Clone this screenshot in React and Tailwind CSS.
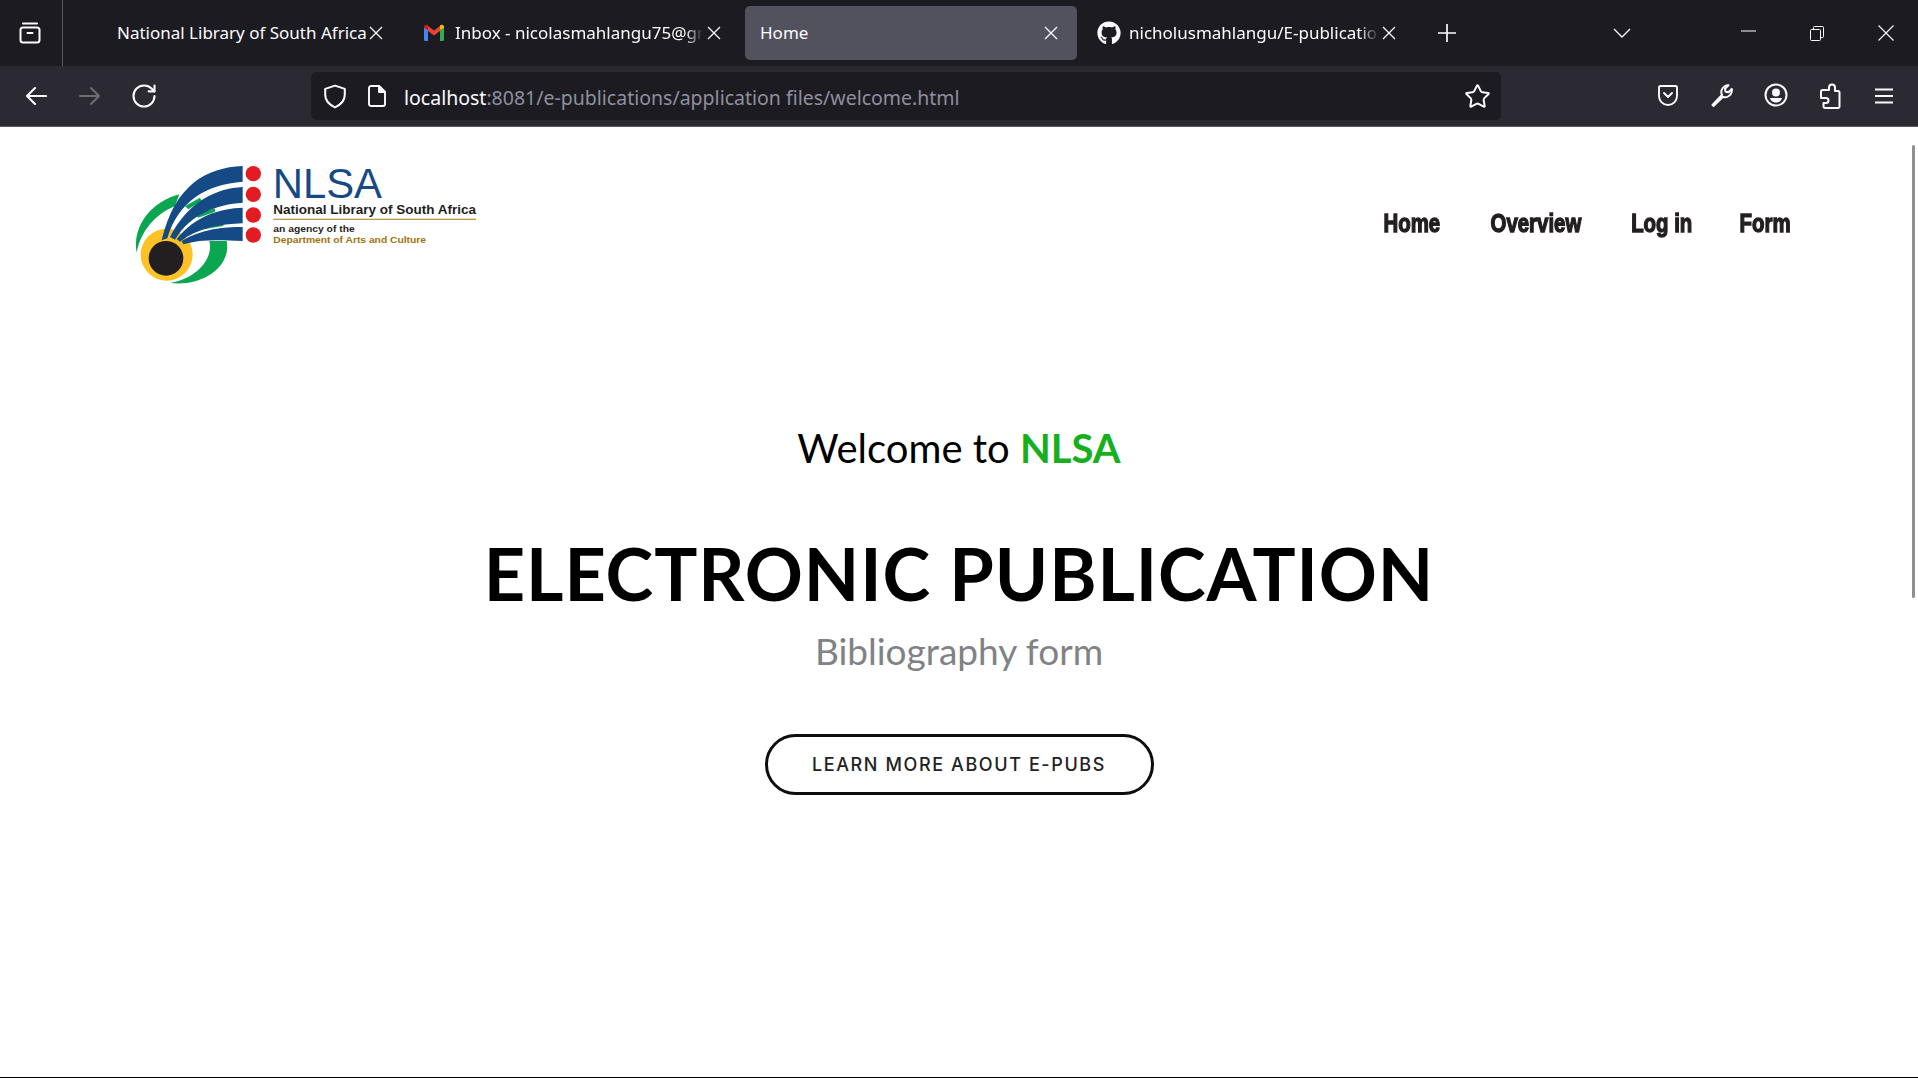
import React from "react";
import { RotateCw, Star } from "lucide-react";
import { FaGithub } from "react-icons/fa";

function Gmail() {
  return (
    <svg width="22" height="18" viewBox="0 0 22 18" className="shrink-0">
      <path d="M1 17V3l4 3v11H2a1 1 0 0 1-1-1z" fill="#4285f4" />
      <path d="M21 17V3l-4 3v11h3a1 1 0 0 0 1-1z" fill="#34a853" />
      <path d="M17 6V1.500l1-.5c1-.6 3 0 3 2v1z" fill="#fbbc04" />
      <path d="M5 6V1.500L4 1C3 .4 1 1 1 3v1z" fill="#c5221f" />
      <path d="M5 2l6 4.500L17 2v5l-6 4.500L5 7z" fill="#ea4335" />
    </svg>
  );
}

function CloseX({ className = "" }) {
  return (
    <svg width="14" height="14" viewBox="0 0 14 14" fill="none" stroke="#fbfbfe" strokeWidth="1.3" className={`shrink-0 ${className}`}>
      <path d="M1 1l12 12M13 1L1 13" />
    </svg>
  );
}

function Logo() {
  return (
    <svg width="370" height="140" viewBox="0 0 1110 420" className="shrink-0">
      <path d="M178,130 C100,150 36,220 50,305 C62,240 105,190 165,165 Z" fill="#0aa650" />
      <path d="M150,396 C250,408 335,345 320,270 L268,270 C282,330 220,385 150,396 Z" fill="#0aa650" />
      <path d="M195,165 L240,140 L245,150 L205,175 Z" fill="#0aa650" />
      <path d="M225,190 L285,172 L285,182 L235,200 Z" fill="#0aa650" />
      <path d="M245,225 L310,215 L310,225 L250,235 Z" fill="#0aa650" />
      <circle cx="140" cy="311" r="78" fill="#fdc226" />
      <path d="M140,255 L150,232 L156,236 L148,258 Z M155,258 L172,235 L178,240 L165,262 Z" fill="#fdc226" />
      <circle cx="138" cy="322" r="52" fill="#231f20" />
      <path d="M368,45 C260,50 165,100 125,268 L142,262 C175,150 260,100 368,92 Z" fill="#144a85" />
      <path d="M368,108 C290,112 205,150 150,258 L165,266 C210,190 290,160 368,155 Z" fill="#144a85" />
      <path d="M368,170 C300,172 225,195 170,264 L180,272 C235,230 300,220 368,217 Z" fill="#144a85" />
      <path d="M368,228 C310,228 240,235 185,270 L190,280 C245,262 310,268 368,270 Z" fill="#144a85" />
      <circle cx="400" cy="68" r="23" fill="#e31b23" />
      <circle cx="400" cy="130" r="23" fill="#e31b23" />
      <circle cx="400" cy="192" r="23" fill="#e31b23" />
      <circle cx="400" cy="252" r="23" fill="#e31b23" />
      <text x="458" y="140" fontSize="125" textLength="328" lengthAdjust="spacingAndGlyphs" fill="#174a84" fontFamily="'Liberation Sans', sans-serif">NLSA</text>
      <text x="460" y="188" fontSize="37" fontWeight="700" textLength="608" lengthAdjust="spacingAndGlyphs" fill="#231f20" fontFamily="'Liberation Sans', sans-serif">National Library of South Africa</text>
      <rect x="460" y="203" width="608" height="4" fill="#b99a52" />
      <text x="460" y="243" fontSize="25" fontWeight="700" textLength="244" lengthAdjust="spacingAndGlyphs" fill="#231f20" fontFamily="'Liberation Sans', sans-serif">an agency of the</text>
      <text x="460" y="277" fontSize="25" fontWeight="700" textLength="458" lengthAdjust="spacingAndGlyphs" fill="#a0730f" fontFamily="'Liberation Sans', sans-serif">Department of Arts and Culture</text>
    </svg>
  );
}

function NavItem({ w, children }) {
  return (
    <span className={`flex justify-center whitespace-nowrap ${w}`}>
      <span className="inline-block scale-x-[.77]">{children}</span>
    </span>
  );
}

export default function App() {
  return (
    <div className="relative flex h-[1078px] w-[1918px] flex-col overflow-hidden bg-white font-['Noto_Sans',sans-serif]">
      {/* tab strip */}
      <div className="flex h-[66px] shrink-0 items-center bg-[#1c1b22] text-[#fbfbfe]">
        <div className="flex h-full w-[63px] shrink-0 items-center justify-center border-r border-[#55555f] pr-[2px]">
          <svg width="24" height="24" viewBox="0 0 24 24" fill="none" stroke="#fbfbfe" strokeWidth="2" strokeLinecap="round">
            <rect x="2.500" y="6.500" width="19" height="15" rx="2.500" />
            <path d="M5 2.500h14M9.500 12h5" />
          </svg>
        </div>
        <span className="ml-[54px] w-[249px] shrink-0 whitespace-nowrap text-[17px]">National Library of South Africa</span>
        <CloseX className="ml-[3px]" />
        <span className="ml-[40px]"><Gmail /></span>
        <span className="ml-[10px] w-[248px] shrink-0 overflow-hidden whitespace-nowrap text-[17px] [mask-image:linear-gradient(to_right,black_93%,transparent)]">Inbox - nicolasmahlangu75@gmail.com</span>
        <CloseX className="ml-[4px]" />
        <div className="ml-[24px] flex h-[54px] w-[332px] shrink-0 items-center justify-between rounded-[5px] bg-[#52525e] pl-[15px] pr-[19px]">
          <span className="text-[17px]">Home</span>
          <CloseX />
        </div>
        <span className="ml-[20px] shrink-0"><FaGithub size={24} color="#fbfbfe" /></span>
        <span className="ml-[8px] w-[250px] shrink-0 overflow-hidden whitespace-nowrap text-[17px] [mask-image:linear-gradient(to_right,black_92%,transparent)]">nicholusmahlangu/E-publications</span>
        <CloseX className="ml-[3px]" />
        <svg width="18" height="18" viewBox="0 0 18 18" fill="none" stroke="#fbfbfe" strokeWidth="1.700" className="ml-[42px] shrink-0"><path d="M9 0v18M0 9h18" /></svg>
        <svg width="18" height="10" viewBox="0 0 18 10" fill="none" stroke="#fbfbfe" strokeWidth="1.300" className="ml-[157px] shrink-0"><path d="M1 1l8 8 8-8" /></svg>
        <svg width="15" height="4" viewBox="0 0 15 4" fill="none" stroke="#fbfbfe" strokeWidth="1" className="ml-[110px] mb-[4px] shrink-0"><path d="M0 2h15" /></svg>
        <svg width="14" height="15" viewBox="0 0 14 15" fill="none" stroke="#fbfbfe" strokeWidth="1" className="ml-[54px] shrink-0"><rect x=".5" y="3.500" width="10" height="11" rx="1" /><path d="M3.500 3.500V1.500a1 1 0 0 1 1-1h8a1 1 0 0 1 1 1v9a1 1 0 0 1-1 1h-2" /></svg>
        <svg width="16" height="16" viewBox="0 0 16 16" fill="none" stroke="#fbfbfe" strokeWidth="1.100" className="ml-[54px] shrink-0"><path d="M.5.500l15 15M15.500.5l-15 15" /></svg>
      </div>

      {/* toolbar */}
      <div className="flex h-[61px] shrink-0 items-center border-b border-[#5b5b66] bg-[#2b2a33] text-[#fbfbfe]">
        <svg width="22" height="20" viewBox="0 0 22 20" fill="none" stroke="#fbfbfe" strokeWidth="2.100" strokeLinecap="round" strokeLinejoin="round" className="ml-[25px] shrink-0"><path d="M10 2L2 10l8 8M2 10h19" /></svg>
        <svg width="22" height="20" viewBox="0 0 22 20" fill="none" stroke="#6d6c73" strokeWidth="2.100" strokeLinecap="round" strokeLinejoin="round" className="ml-[32px] shrink-0"><path d="M12 2l8 8-8 8M20 10H1" /></svg>
        <RotateCw size={28} strokeWidth={1.8} className="ml-[29px] shrink-0" />
        <div className="ml-[153px] flex h-[48px] w-[1190px] shrink-0 items-center rounded-[5px] bg-[#1c1b22] pl-[13px]">
          <svg width="22" height="25" viewBox="2 1 20 23" fill="none" stroke="#fbfbfe" strokeWidth="1.900" strokeLinejoin="round" className="shrink-0"><path d="M12 2.500L21 5.500V11C21 17 16.500 20.500 12 22.500C7.500 20.500 3 17 3 11V5.500Z" /></svg>
          <svg width="18" height="22" viewBox="0 0 18 22" fill="none" stroke="#fbfbfe" strokeWidth="1.900" strokeLinejoin="round" className="ml-[22px] shrink-0"><path d="M3 1h8l6 6v12a2 2 0 0 1-2 2H3a2 2 0 0 1-2-2V3a2 2 0 0 1 2-2z" /><path d="M11 1v6h6z" fill="#fbfbfe" /></svg>
          <span className="ml-[18px] mt-[3px] whitespace-nowrap text-[19.500px]">
            localhost<span className="text-[#8f8f9d]">:8081/e-publications/application files/welcome.html</span>
          </span>
          <Star size={27} strokeWidth={1.800} className="ml-auto mr-[10px] shrink-0" />
        </div>
        <div className="ml-[140px] flex">
          <span className="flex w-[54px] justify-center pt-[1px]">
            <svg width="22" height="23" viewBox="0 0 22 23" fill="none" stroke="#fbfbfe" strokeWidth="1.900" strokeLinecap="round" strokeLinejoin="round">
              <path d="M3.500 2h15A1.500 1.500 0 0 1 20 3.500V12a9 9 0 0 1-18 0V3.500A1.500 1.500 0 0 1 3.500 2z" />
              <path d="M7 9l4 4 4-4" />
            </svg>
          </span>
          <span className="flex w-[54px] justify-center">
            <svg width="24" height="24" viewBox="0 0 24 24" fill="none" stroke="#fbfbfe" strokeWidth="2" strokeLinecap="round" strokeLinejoin="round">
              <path d="M2.500 22l9.500-10c-1.500-3-.5-7 3-9 1.200-.7 2.300-1 3.500-.8l-3.500 3.500.5 3 3 .5 3.300-3.300c.4 3-1 6-3.800 7.600-1.500.9-3.500 1-5 .3L3.500 23" />
            </svg>
          </span>
          <span className="flex w-[54px] justify-center">
            <svg width="24" height="24" viewBox="0 0 24 24" fill="none" stroke="#fbfbfe" strokeWidth="2">
              <circle cx="12" cy="12" r="10.500" />
              <circle cx="12" cy="9.500" r="3" fill="#fbfbfe" />
              <path d="M6 15h12c-1 3.500-3.400 4.500-6 4.500S7 18.500 6 15z" fill="#fbfbfe" stroke="none" />
            </svg>
          </span>
          <span className="flex w-[54px] justify-center">
            <svg width="22" height="26" viewBox="0 0 22 26" fill="none" stroke="#fbfbfe" strokeWidth="2" strokeLinejoin="round">
              <path d="M8 7h2V4.500a3 3 0 0 1 6 0V8h3a1.500 1.500 0 0 1 1.500 1.500V23.500A1.500 1.500 0 0 1 19 25H6a1.500 1.500 0 0 1-1.500-1.500V20H7a2.500 2.500 0 0 0 0-5H2v-6.500A1.500 1.500 0 0 1 3.500 7z" />
            </svg>
          </span>
          <span className="flex w-[54px] items-center justify-center">
            <svg width="18" height="16" viewBox="0 0 18 16" fill="none" stroke="#fbfbfe" strokeWidth="1.900"><path d="M0 1.500h18M0 8h18M0 14.500h18" /></svg>
          </span>
        </div>
      </div>

      {/* page */}
      <div className="relative flex flex-1 flex-col">
        <header className="flex h-[188px] items-center justify-between pl-[120px] pr-[128px]">
          <Logo />
          <nav className="mt-[6px] flex items-center gap-[49px] font-['Liberation_Sans',sans-serif] text-[26.500px] font-bold text-[#231f20] [-webkit-text-stroke:1.400px_#231f20]">
            <NavItem w="w-[57px]">Home</NavItem>
            <NavItem w="w-[94px]">Overview</NavItem>
            <NavItem w="w-[59px]">Log in</NavItem>
            <NavItem w="w-[50px]">Form</NavItem>
          </nav>
        </header>
        <main className="flex flex-col items-center font-['Lato',sans-serif]">
          <p className="mt-[108px] text-[40px] leading-[50px] text-black">
            Welcome to <span className="font-bold text-[#16b01e]">NLSA</span>
          </p>
          <h1 className="mt-[55px] whitespace-nowrap text-[72px] font-bold leading-[90px] tracking-[0.9px] text-black">ELECTRONIC PUBLICATION</h1>
          <p className="mt-[10px] text-[37px] leading-[46px] text-[#808285]">Bibliography form</p>
          <button className="mt-[60px] flex h-[61px] w-[389px] items-center justify-center rounded-full border-[3px] border-[#0d0d0d] font-['Inter',sans-serif] text-[18px] font-medium tracking-[1.600px] text-[#222]">
            LEARN MORE ABOUT E-PUBS
          </button>
        </main>
        <div className="absolute right-[3px] top-[18px] h-[453px] w-[3px] rounded-full bg-[#8f8f8f]" />
      </div>
      <div className="h-px shrink-0 bg-black" />
    </div>
  );
}
